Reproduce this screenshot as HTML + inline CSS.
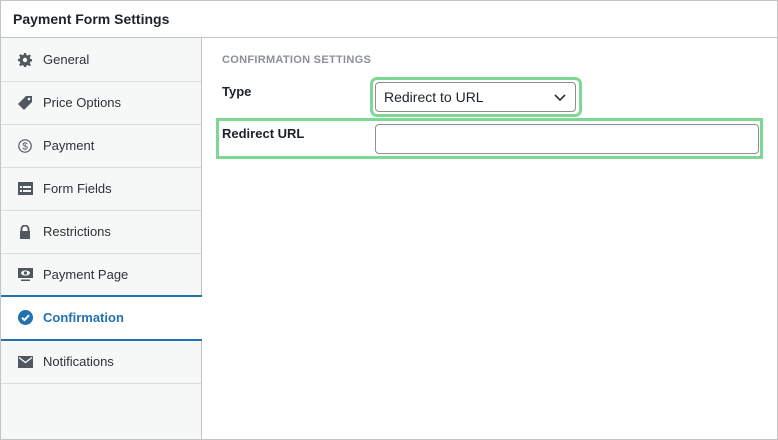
<!DOCTYPE html><html><head><style>
*{box-sizing:border-box;margin:0;padding:0}
body{width:778px;height:440px;background:#fff;font-family:"Liberation Sans",sans-serif;color:#1d2327;position:relative;overflow:hidden}
.frame{position:absolute;left:0;top:0;width:778px;height:440px;border:1px solid #c3c4c7}
.hdr{position:absolute;left:1px;top:1px;width:776px;height:37px;border-bottom:1px solid #c3c4c7;font-weight:bold;font-size:14px;line-height:36px;padding-left:12px}
.side{position:absolute;left:1px;top:38px;width:201px;height:401px;background:#f6f7f7;border-right:1px solid #c3c4c7}
.it{position:absolute;left:0;width:200px;height:43px;border-bottom:1px solid #dcdcde;font-size:13px;line-height:42px;padding-left:42px;color:#2c3338}
.it svg{position:absolute;left:17px;top:14px}
.act{background:#fff;color:#2271b1;font-weight:bold;border-top:2px solid #2271b1;border-bottom:2px solid #2271b1;width:201px}
.sec{position:absolute;left:222px;top:54px;font-size:11px;font-weight:bold;color:#8c8f94;letter-spacing:.3px}
.lbl{position:absolute;font-size:13px;font-weight:bold}
</style></head><body>
<div class="frame"></div>
<div class="hdr">Payment Form Settings</div>
<div class="side">
<div class="it" style="top:0;height:44px;line-height:44px"><svg width="14" height="14" viewBox="0 0 14 14" style="top:15px"><path d="M6 0h2l.4 2 1.4.6 1.7-1.2 1.4 1.4-1.2 1.7.6 1.4 2 .4v2l-2 .4-.6 1.4 1.2 1.7-1.4 1.4-1.7-1.2-1.4.6-.4 2H6l-.4-2-1.4-.6-1.7 1.2-1.4-1.4 1.2-1.7L1.7 8.4 0 8V6l1.7-.4.6-1.4-1.2-1.7 1.4-1.4 1.7 1.2 1.4-.6z" fill="#50575e"/><circle cx="7" cy="7" r="2.2" fill="#f6f7f7"/></svg>General</div>
<div class="it" style="top:44px"><svg width="15" height="14" viewBox="0 0 15 14"><path d="M0 8L8 0h6v6l-8 8z" fill="#50575e"/><circle cx="11" cy="3" r="1.3" fill="#f6f7f7"/></svg>Price Options</div>
<div class="it" style="top:87px"><svg width="14" height="14" viewBox="0 0 14 14"><circle cx="7" cy="7" r="6.2" fill="none" stroke="#50575e" stroke-width="1.2"/><text x="7" y="10.5" font-size="10" text-anchor="middle" fill="#50575e" font-family="Liberation Sans">$</text></svg>Payment</div>
<div class="it" style="top:130px"><svg width="15" height="13" viewBox="0 0 15 13"><rect width="15" height="13" fill="#50575e"/><rect x="2" y="4" width="2" height="2" fill="#f6f7f7"/><rect x="5" y="4" width="8" height="2" fill="#f6f7f7"/><rect x="2" y="8" width="2" height="2" fill="#f6f7f7"/><rect x="5" y="8" width="8" height="2" fill="#f6f7f7"/></svg>Form Fields</div>
<div class="it" style="top:173px"><svg width="14" height="14" viewBox="0 0 14 14"><path d="M3.5 6V4a3.5 3.5 0 017 0v2" fill="none" stroke="#50575e" stroke-width="1.8"/><rect x="2" y="6" width="10" height="8" fill="#50575e"/></svg>Restrictions</div>
<div class="it" style="top:216px"><svg width="15" height="14" viewBox="0 0 15 14"><rect width="15" height="10" fill="#50575e"/><ellipse cx="7.5" cy="5" rx="4.5" ry="2.6" fill="#f6f7f7"/><circle cx="7.5" cy="5" r="1.6" fill="#50575e"/><rect x="3" y="11.5" width="9" height="1.5" fill="#50575e"/></svg>Payment Page</div>
<div class="it act" style="top:257px;height:46px;line-height:42px"><svg width="15" height="15" viewBox="0 0 15 15" style="top:13px"><circle cx="7.5" cy="7.5" r="7.5" fill="#2271b1"/><path d="M4 7.7l2.4 2.4L11 5.2" fill="none" stroke="#fff" stroke-width="2"/></svg>Confirmation</div>
<div class="it" style="top:303px"><svg width="15" height="12" viewBox="0 0 15 12" style="top:15px"><rect width="15" height="12" fill="#50575e"/><path d="M1 1.5l6.5 5 6.5-5" fill="none" stroke="#f6f7f7" stroke-width="1.4"/></svg>Notifications</div>
</div>
<div class="sec">CONFIRMATION SETTINGS</div>
<div class="lbl" style="left:222px;top:84px">Type</div>
<div style="position:absolute;left:370px;top:77px;width:212px;height:40px;border:3px solid #7ed894;border-radius:7px"></div>
<div style="position:absolute;left:375px;top:82px;width:201px;height:30px;border:1px solid #8c8f94;border-radius:4px;font-size:14px;line-height:28px;padding-left:8px">Redirect to URL<svg width="12" height="8" viewBox="0 0 12 8" style="position:absolute;right:9px;top:11px"><path d="M1 1l5 5 5-5" fill="none" stroke="#2c3338" stroke-width="1.6"/></svg></div>
<div style="position:absolute;left:216px;top:118px;width:547px;height:41px;border:3px solid #7ed894"></div>
<div class="lbl" style="left:222px;top:126px">Redirect URL</div>
<div style="position:absolute;left:375px;top:124px;width:384px;height:30px;border:1px solid #8c8f94;border-radius:4px"></div>
</body></html>
